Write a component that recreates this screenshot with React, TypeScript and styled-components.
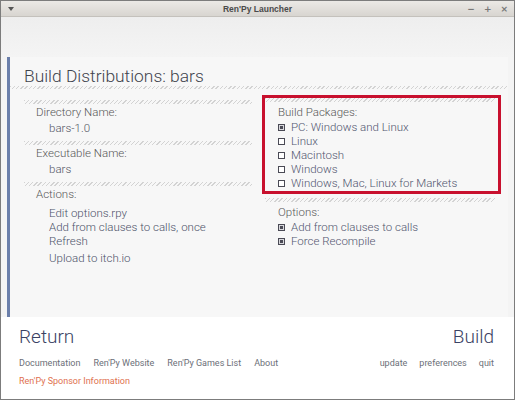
import styled, { createGlobalStyle } from "styled-components";

const Global = createGlobalStyle`
  html, body { margin: 0; padding: 0; background: #ffffff; }
  * { box-sizing: border-box; }
`;

const hatch = (h: number) => `
  height: ${h}px;
  background: repeating-linear-gradient(
    135deg,
    #d3d3d3 0px,
    #d3d3d3 1px,
    transparent 1px,
    transparent 3px
  );
`;

const Window = styled.div`
  width: 515px;
  height: 400px;
  border: 1px solid #7c7c7c;
  display: flex;
  flex-direction: column;
  font-family: Roboto, "Liberation Sans", sans-serif;
  overflow: hidden;
  background: #ffffff;
`;

const TitleBar = styled.div`
  height: 16px;
  flex: none;
  display: grid;
  grid-template-columns: 60px 1fr 60px;
  align-items: center;
  background: linear-gradient(#ebe9e6, #d8d5d0);
  border-bottom: 1px solid #c4c1bc;
  color: #4a4a4a;
`;

const MenuArrow = styled.span`
  justify-self: start;
  margin-left: 7px;
  width: 0;
  height: 0;
  border-left: 3px solid transparent;
  border-right: 3px solid transparent;
  border-top: 4px solid #555;
`;

const TitleText = styled.div`
  text-align: center;
  font-family: "Liberation Sans", "DejaVu Sans", sans-serif;
  font-weight: 700;
  font-size: 8.5px;
  line-height: 16px;
`;

const WinButtons = styled.div`
  display: flex;
  justify-content: flex-end;
  gap: 9px;
  padding-right: 6px;
  font-family: "DejaVu Sans", sans-serif;
  font-weight: 700;
  font-size: 9px;
  color: #777;
`;

const TopSpace = styled.div`
  height: 40px;
  flex: none;
  background: linear-gradient(#eeeeee, #f4f4f4);
`;

const PanelWrap = styled.div`
  background: #f4f4f4;
`;

const Panel = styled.div`
  height: 260px;
  flex: none;
  margin: 0 6px 0 6px;
  border-left: 3px solid #6b7faa;
  background: #f7f7f7;
  display: flex;
  flex-direction: column;
`;

const Heading = styled.div`
  margin-top: 11px;
  padding-left: 14px;
  font-size: 17.4px;
  line-height: 17px;
  font-weight: 300;
  color: #40434c;
`;

const ThinHatch = styled.div`
  ${hatch(3)}
  margin-top: 1px;
`;

const Columns = styled.div`
  display: flex;
  gap: 13px;
  padding-left: 14px;
  margin-top: 11px;
`;

const Column = styled.div<{ $w: number }>`
  width: ${(p) => p.$w}px;
  display: flex;
  flex-direction: column;
`;

const Hatch = styled.div`
  ${hatch(4)}
`;

const Section = styled.div`
  display: flex;
  flex-direction: column;
  margin-bottom: 5px;
`;

const Label = styled.div<{ $gap?: number }>`
  padding-left: 12px;
  font-size: 11.5px;
  line-height: 16px;
  font-weight: 300;
  color: #585858;
  margin-bottom: ${(p) => p.$gap ?? 0}px;
`;

const Value = styled.div`
  padding-left: 25px;
  font-size: 11.5px;
  line-height: 16px;
  font-weight: 300;
  color: #525564;
`;

const Action = styled.div<{ $top?: number }>`
  padding-left: 25px;
  font-size: 11.5px;
  line-height: 14px;
  font-weight: 300;
  color: #4c5269;
  margin-top: ${(p) => p.$top ?? 0}px;
`;

const Highlight = styled.div`
  margin: -5px -6px 0 -3px;
  border: 3px solid #c8102e;
  padding-bottom: 1px;
  display: flex;
  flex-direction: column;
`;

const BoxHatch = styled.div`
  ${hatch(4)}
  margin-right: 3px;
`;

const RightLabel = styled(Label)`
  padding-left: 13px;
  margin-top: 2px;
`;

const CheckRow = styled.div`
  display: flex;
  align-items: center;
  gap: 6px;
  padding-left: 13px;
  font-size: 11.5px;
  line-height: 14px;
  font-weight: 300;
  color: #51566f;
`;

const Box = styled.span<{ $on?: boolean }>`
  width: 7px;
  height: 7px;
  flex: none;
  border: 1px solid #4a4a55;
  background: ${(p) => (p.$on ? "#4a4a55" : "#ffffff")};
  box-shadow: ${(p) => (p.$on ? "inset 0 0 0 1px #d8d8dc" : "none")};
`;

const AfterBox = styled.div`
  margin-top: 4px;
  display: flex;
  flex-direction: column;
`;

const Footer = styled.div`
  flex: 1;
  background: #ffffff;
  padding: 10px 20px 0 18px;
  display: flex;
  flex-direction: column;
`;

const FooterRow = styled.div<{ $top?: number }>`
  display: flex;
  justify-content: space-between;
  align-items: center;
  margin-top: ${(p) => p.$top ?? 0}px;
`;

const BigButton = styled.div`
  font-size: 19px;
  line-height: 20px;
  font-weight: 300;
  color: #3a4263;
`;

const Links = styled.div<{ $gap: number }>`
  display: flex;
  gap: ${(p) => p.$gap}px;
`;

const Link = styled.div<{ $accent?: boolean }>`
  font-size: 9px;
  line-height: 14px;
  color: ${(p) => (p.$accent ? "#e0714f" : "#6c6f78")};
`;

const packages = [
  { name: "PC: Windows and Linux", on: true },
  { name: "Linux", on: false },
  { name: "Macintosh", on: false },
  { name: "Windows", on: false },
  { name: "Windows, Mac, Linux for Markets", on: false },
];

const options = ["Add from clauses to calls", "Force Recompile"];

export default function App() {
  return (
    <>
      <Global />
      <Window>
        <TitleBar>
          <MenuArrow />
          <TitleText>Ren'Py Launcher</TitleText>
          <WinButtons>
            <span>−</span>
            <span>+</span>
            <span>×</span>
          </WinButtons>
        </TitleBar>
        <TopSpace />
        <PanelWrap>
          <Panel>
            <Heading>Build Distributions: bars</Heading>
            <ThinHatch />
            <Columns>
              <Column $w={228}>
                <Section>
                  <Hatch />
                  <Label>Directory Name:</Label>
                  <Value>bars-1.0</Value>
                </Section>
                <Section>
                  <Hatch />
                  <Label>Executable Name:</Label>
                  <Value>bars</Value>
                </Section>
                <Section>
                  <Hatch />
                  <Label $gap={4}>Actions:</Label>
                  <Action>Edit options.rpy</Action>
                  <Action>Add from clauses to calls, once</Action>
                  <Action>Refresh</Action>
                  <Action $top={3}>Upload to itch.io</Action>
                </Section>
              </Column>
              <Column $w={230}>
                <Highlight>
                  <BoxHatch />
                  <RightLabel>Build Packages:</RightLabel>
                  {packages.map((p) => (
                    <CheckRow key={p.name}>
                      <Box $on={p.on} />
                      {p.name}
                    </CheckRow>
                  ))}
                </Highlight>
                <AfterBox>
                  <Hatch />
                  <RightLabel>Options:</RightLabel>
                  {options.map((o) => (
                    <CheckRow key={o}>
                      <Box $on />
                      {o}
                    </CheckRow>
                  ))}
                </AfterBox>
              </Column>
            </Columns>
          </Panel>
        </PanelWrap>
        <Footer>
          <FooterRow>
            <BigButton>Return</BigButton>
            <BigButton>Build</BigButton>
          </FooterRow>
          <FooterRow $top={9}>
            <Links $gap={13}>
              <Link>Documentation</Link>
              <Link>Ren'Py Website</Link>
              <Link>Ren'Py Games List</Link>
              <Link>About</Link>
            </Links>
            <Links $gap={12}>
              <Link>update</Link>
              <Link>preferences</Link>
              <Link>quit</Link>
            </Links>
          </FooterRow>
          <FooterRow $top={4}>
            <Link $accent>Ren'Py Sponsor Information</Link>
          </FooterRow>
        </Footer>
      </Window>
    </>
  );
}
